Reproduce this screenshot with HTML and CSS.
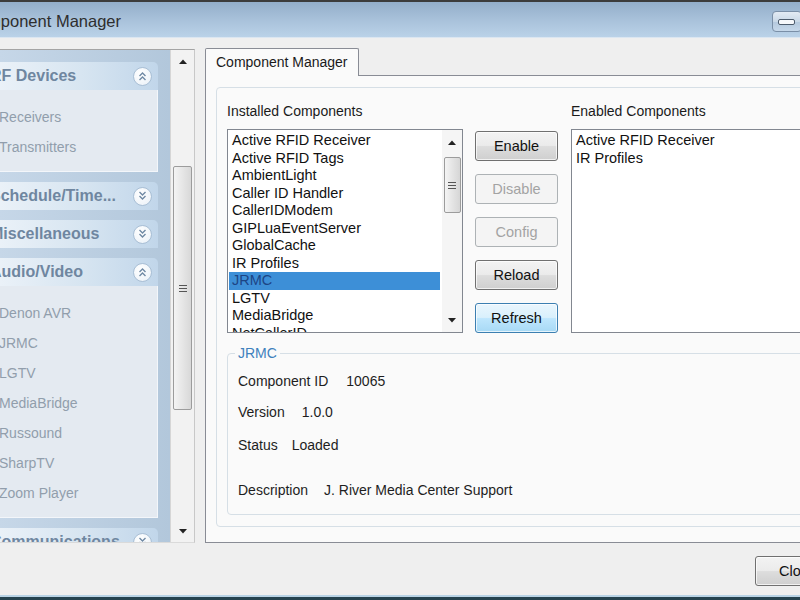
FILE: index.html
```html
<!DOCTYPE html>
<html>
<head>
<meta charset="utf-8">
<title>Component Manager</title>
<link rel="stylesheet" href="styles.css">
</head>
<body>
<div class="window">
  <div class="titlebar">
    <span class="title">Component Manager</span>
    <div class="minbtn"><span class="minbar"></span></div>
  </div>
  <div class="client">
    <div class="main">
      <div class="sidebar">
        <div class="taskpane">
          <div class="group">
            <div class="ghead"><span class="gtitle">RF Devices</span><span class="chev"><svg width="9" height="10" viewBox="0 0 9 10"><polyline points="1.5,5 4.5,2 7.5,5" /><polyline points="1.5,9 4.5,6 7.5,9" /></svg></span></div>
            <div class="gbody">
              <div class="gitem">Receivers</div>
              <div class="gitem">Transmitters</div>
            </div>
          </div>
          <div class="group">
            <div class="ghead"><span class="gtitle">Schedule/Time...</span><span class="chev"><svg width="9" height="10" viewBox="0 0 9 10"><polyline points="1.5,1 4.5,4 7.5,1" /><polyline points="1.5,5 4.5,8 7.5,5" /></svg></span></div>
          </div>
          <div class="group">
            <div class="ghead"><span class="gtitle">Miscellaneous</span><span class="chev"><svg width="9" height="10" viewBox="0 0 9 10"><polyline points="1.5,1 4.5,4 7.5,1" /><polyline points="1.5,5 4.5,8 7.5,5" /></svg></span></div>
          </div>
          <div class="group">
            <div class="ghead"><span class="gtitle">Audio/Video</span><span class="chev"><svg width="9" height="10" viewBox="0 0 9 10"><polyline points="1.5,5 4.5,2 7.5,5" /><polyline points="1.5,9 4.5,6 7.5,9" /></svg></span></div>
            <div class="gbody">
              <div class="gitem">Denon AVR</div>
              <div class="gitem">JRMC</div>
              <div class="gitem">LGTV</div>
              <div class="gitem">MediaBridge</div>
              <div class="gitem">Russound</div>
              <div class="gitem">SharpTV</div>
              <div class="gitem">Zoom Player</div>
            </div>
          </div>
          <div class="group">
            <div class="ghead"><span class="gtitle">Communications</span><span class="chev"><svg width="9" height="10" viewBox="0 0 9 10"><polyline points="1.5,1 4.5,4 7.5,1" /><polyline points="1.5,5 4.5,8 7.5,5" /></svg></span></div>
          </div>
        </div>
        <div class="vscroll">
          <div class="sarrow"><svg width="8" height="5" viewBox="0 0 8 5"><polygon points="0,5 4,0.5 8,5" /></svg></div>
          <div class="strack"><div class="sthumb"><svg width="8" height="7" viewBox="0 0 8 7"><path d="M0 0.5H8M0 3.5H8M0 6.5H8" /></svg></div></div>
          <div class="sarrow"><svg width="8" height="5" viewBox="0 0 8 5"><polygon points="0,0 4,4.5 8,0" /></svg></div>
        </div>
      </div>
      <div class="tabs">
        <div class="tabstrip"><div class="tab">Component Manager</div></div>
        <div class="tabpanel">
          <div class="groupouter">
            <div class="toprow">
              <div class="col-installed">
                <div class="label">Installed Components</div>
                <div class="listbox">
                  <div class="items">
                    <div class="item">Active RFID Receiver</div>
                    <div class="item">Active RFID Tags</div>
                    <div class="item">AmbientLight</div>
                    <div class="item">Caller ID Handler</div>
                    <div class="item">CallerIDModem</div>
                    <div class="item">GIPLuaEventServer</div>
                    <div class="item">GlobalCache</div>
                    <div class="item">IR Profiles</div>
                    <div class="item selected">JRMC</div>
                    <div class="item">LGTV</div>
                    <div class="item">MediaBridge</div>
                    <div class="item">NetCallerID</div>
                  </div>
                  <div class="lscroll">
                    <div class="larrow"><svg width="8" height="5" viewBox="0 0 8 5"><polygon points="0,5 4,0.5 8,5" /></svg></div>
                    <div class="ltrack"><div class="lthumb"><svg width="8" height="7" viewBox="0 0 8 7"><path d="M0 0.5H8M0 3.5H8M0 6.5H8" /></svg></div></div>
                    <div class="larrow"><svg width="8" height="5" viewBox="0 0 8 5"><polygon points="0,0 4,4.5 8,0" /></svg></div>
                  </div>
                </div>
              </div>
              <div class="buttons">
                <div class="btn">Enable</div>
                <div class="btn disabled">Disable</div>
                <div class="btn disabled">Config</div>
                <div class="btn">Reload</div>
                <div class="btn focused">Refresh</div>
              </div>
              <div class="col-enabled">
                <div class="label">Enabled Components</div>
                <div class="listbox">
                  <div class="items">
                    <div class="item">Active RFID Receiver</div>
                    <div class="item">IR Profiles</div>
                  </div>
                </div>
              </div>
            </div>
            <fieldset class="details">
              <legend>JRMC</legend>
              <div class="drow"><span>Component ID</span><span>10065</span></div>
              <div class="drow r2"><span>Version</span><span>1.0.0</span></div>
              <div class="drow r3"><span>Status</span><span>Loaded</span></div>
              <div class="drow r4"><span>Description</span><span>J. River Media Center Support</span></div>
            </fieldset>
          </div>
        </div>
      </div>
    </div>
    <div class="footer">
      <div class="btn close">Close</div>
    </div>
  </div>
  <div class="edge"></div>
</div>
</body>
</html>
```
FILE: styles.css
```css
* { box-sizing: border-box; }
html, body { margin: 0; padding: 0; }
body {
  width: 800px;
  height: 600px;
  overflow: hidden;
  background: #efefef;
  font-family: "Liberation Sans", Arial, sans-serif;
  font-size: 14px;
  color: #1a1a1a;
}
.window {
  display: flex;
  flex-direction: column;
  width: 800px;
  height: 600px;
  overflow: hidden;
}

/* title bar */
.titlebar {
  flex: none;
  height: 38px;
  display: flex;
  align-items: center;
  border-top: 2px solid #3c3c3c;
  border-bottom: 1px solid #dbe6f1;
  background: linear-gradient(#93aeca, #a8c1da 50%, #bad2e8);
  overflow: hidden;
}
.title {
  flex: 1;
  margin-left: -34px;
  padding-top: 3px;
  font-size: 16.5px;
  color: #2e2e2e;
  white-space: nowrap;
}
.minbtn {
  flex: none;
  width: 30px;
  height: 21px;
  margin-top: 3px;
  margin-right: -2px;
  border: 1px solid #7a8fa7;
  border-radius: 4px;
  background: linear-gradient(#e3ebf4, #c9d8e7 50%, #b4c8dd 51%, #c6d8ea);
  display: flex;
  align-items: center;
  justify-content: center;
}
.minbar {
  width: 17px;
  height: 6px;
  margin-left: -2px;
  margin-top: 1px;
  border: 1px solid #4d5c6d;
  border-radius: 2px;
  background: #f6f8fb;
}

/* client */
.client {
  flex: 1;
  display: flex;
  flex-direction: column;
  padding-top: 10px;
  background: #efefef;
}
.main {
  flex: none;
  height: 495px;
  display: flex;
}

/* sidebar task pane */
.sidebar {
  flex: none;
  width: 195px;
  height: 494px;
  margin-top: 1px;
  display: flex;
  border-top: 1px solid #a4a4a4;
  border-right: 1px solid #c8c8c8;
  border-bottom: 1px solid #dadada;
}
.taskpane {
  flex: none;
  width: 170px;
  overflow: hidden;
  padding-top: 12px;
  background: linear-gradient(to right, #c6d7e8, #b2c7db);
}
.group {
  width: 170px;
  margin-left: -12px;
  margin-bottom: 10px;
}
.ghead {
  height: 28px;
  display: flex;
  align-items: center;
  justify-content: space-between;
  padding: 0 6px 0 2px;
  border-radius: 0 5px 0 0;
  background: linear-gradient(to right, #edf3f9, #d7e5f1 55%, #c1d6ea);
}
.gtitle {
  font-size: 16px;
  font-weight: bold;
  color: #6f86a0;
  white-space: nowrap;
}
.chev {
  flex: none;
  width: 19px;
  height: 19px;
  border-radius: 50%;
  border: 1px solid #a9bfd5;
  background: radial-gradient(circle at 40% 35%, #ffffff, #e9f0f7);
  display: flex;
  align-items: center;
  justify-content: center;
}
.chev svg polyline {
  fill: none;
  stroke: #6f89a4;
  stroke-width: 1.4;
}
.gbody {
  padding: 12px 0 9px 10px;
  background: #e4eaf1;
  border: 1px solid #f3f6fa;
  border-top: none;
}
.gitem {
  height: 30px;
  line-height: 30px;
  font-size: 14px;
  color: #919eac;
  white-space: nowrap;
}

/* sidebar scrollbar */
.vscroll {
  flex: none;
  width: 24px;
  display: flex;
  flex-direction: column;
  align-items: center;
  background: #f2f2f2;
  border-left: 1px solid #d6d6d6;
}
.sarrow {
  flex: none;
  height: 22px;
  display: flex;
  align-items: center;
  justify-content: center;
}
.sarrow svg polygon, .larrow svg polygon { fill: #222; }
.strack {
  flex: 1;
  display: flex;
  flex-direction: column;
  align-items: center;
}
.sthumb {
  margin-top: 94px;
  width: 19px;
  height: 244px;
  border: 1px solid #9c9c9c;
  border-radius: 2px;
  background: linear-gradient(to right, #f4f4f4, #e6e6e6 50%, #d8d8d8);
  display: flex;
  align-items: center;
  justify-content: center;
}
.sthumb svg path, .lthumb svg path {
  stroke: #555;
  stroke-width: 1;
  fill: none;
}

/* tabs */
.tabs {
  flex: none;
  width: 620px;
  margin-left: 10px;
  display: flex;
  flex-direction: column;
}
.tabstrip {
  flex: none;
  height: 27px;
  display: flex;
}
.tab {
  position: relative;
  z-index: 1;
  height: 28px;
  padding: 0 10px;
  border: 1px solid #898c95;
  border-bottom: none;
  border-radius: 2px 2px 0 0;
  background: #fafafa;
  line-height: 26px;
  font-size: 14px;
  white-space: nowrap;
}
.tabpanel {
  flex: none;
  height: 468px;
  border: 1px solid #898c95;
  background: #fafafa;
  padding: 11px 0 15px 10px;
}
.groupouter {
  height: 100%;
  border: 1px solid #d6dfe6;
  border-radius: 4px;
  padding: 14px 0 0 10px;
}
.toprow {
  display: flex;
  align-items: flex-start;
}
.label {
  height: 18px;
  line-height: 18px;
  margin-bottom: 9px;
  font-size: 14px;
  white-space: nowrap;
}
.col-installed {
  flex: none;
  width: 236px;
}
.col-enabled {
  flex: none;
  width: 260px;
  margin-left: 13px;
}
.listbox {
  height: 204px;
  display: flex;
  border: 1px solid #828790;
  background: #ffffff;
}
.items {
  flex: 1;
  overflow: hidden;
  padding: 2px 2px 0 1px;
}
.item {
  height: 17.5px;
  line-height: 17.5px;
  padding-left: 3px;
  font-size: 14.5px;
  color: #111;
  white-space: nowrap;
}
.item.selected {
  background: #3d8fd7;
  color: #1d4585;
}
.lscroll {
  flex: none;
  width: 20px;
  display: flex;
  flex-direction: column;
  align-items: center;
  background: #f5f5f5;
}
.larrow {
  flex: none;
  height: 24px;
  display: flex;
  align-items: center;
  justify-content: center;
}
.ltrack {
  flex: 1;
}
.lthumb {
  margin-top: 3px;
  width: 17px;
  height: 56px;
  border: 1px solid #9c9c9c;
  border-radius: 2px;
  background: linear-gradient(to right, #f4f4f4, #e4e4e4 50%, #d6d6d6);
  display: flex;
  align-items: center;
  justify-content: center;
}

/* buttons */
.buttons {
  flex: none;
  margin-left: 12px;
  padding-top: 29px;
  display: flex;
  flex-direction: column;
  gap: 13px;
}
.btn {
  width: 83px;
  height: 30px;
  border: 1px solid #707070;
  border-radius: 3px;
  background: linear-gradient(#f3f3f3, #ebebeb 48%, #dddddd 52%, #cfcfcf);
  display: flex;
  align-items: center;
  justify-content: center;
  font-size: 14.5px;
  color: #111;
  box-shadow: inset 0 0 0 1px rgba(255, 255, 255, 0.7);
}
.btn.disabled {
  border-color: #adb2b5;
  background: #f4f4f4;
  color: #a3a3a3;
  box-shadow: none;
}
.btn.focused {
  border-color: #3c7fb1;
  background: linear-gradient(#eaf6fd, #d9f0fc 48%, #bee6fd 52%, #a7d9f5);
}

/* details */
.details {
  width: 600px;
  margin: 11px 0 0 0;
  padding: 10px 0 15px 10px;
  border: 1px solid #d6dfe6;
  border-radius: 4px;
  min-width: 0;
}
.details legend {
  margin-left: -3px;
  padding: 0 3px;
  line-height: 18px;
  font-size: 14px;
  color: #3f81bd;
}
.drow {
  display: flex;
  gap: 18px;
  height: 18px;
  line-height: 18px;
  font-size: 14px;
  color: #1e1e1e;
  white-space: nowrap;
}
.drow.r2 { margin-top: 13px; gap: 17px; }
.drow.r3 { margin-top: 15px; gap: 14px; }
.drow.r4 { margin-top: 27px; gap: 16px; }

/* footer */
.footer {
  flex: 1;
  display: flex;
  justify-content: flex-end;
  padding-top: 13px;
}
.btn.close {
  width: 85px;
  margin-right: -40px;
}

.edge {
  flex: none;
  height: 5px;
  background: linear-gradient(#b9d3e5 0, #b9d3e5 2px, #26434f 2px);
}
```
